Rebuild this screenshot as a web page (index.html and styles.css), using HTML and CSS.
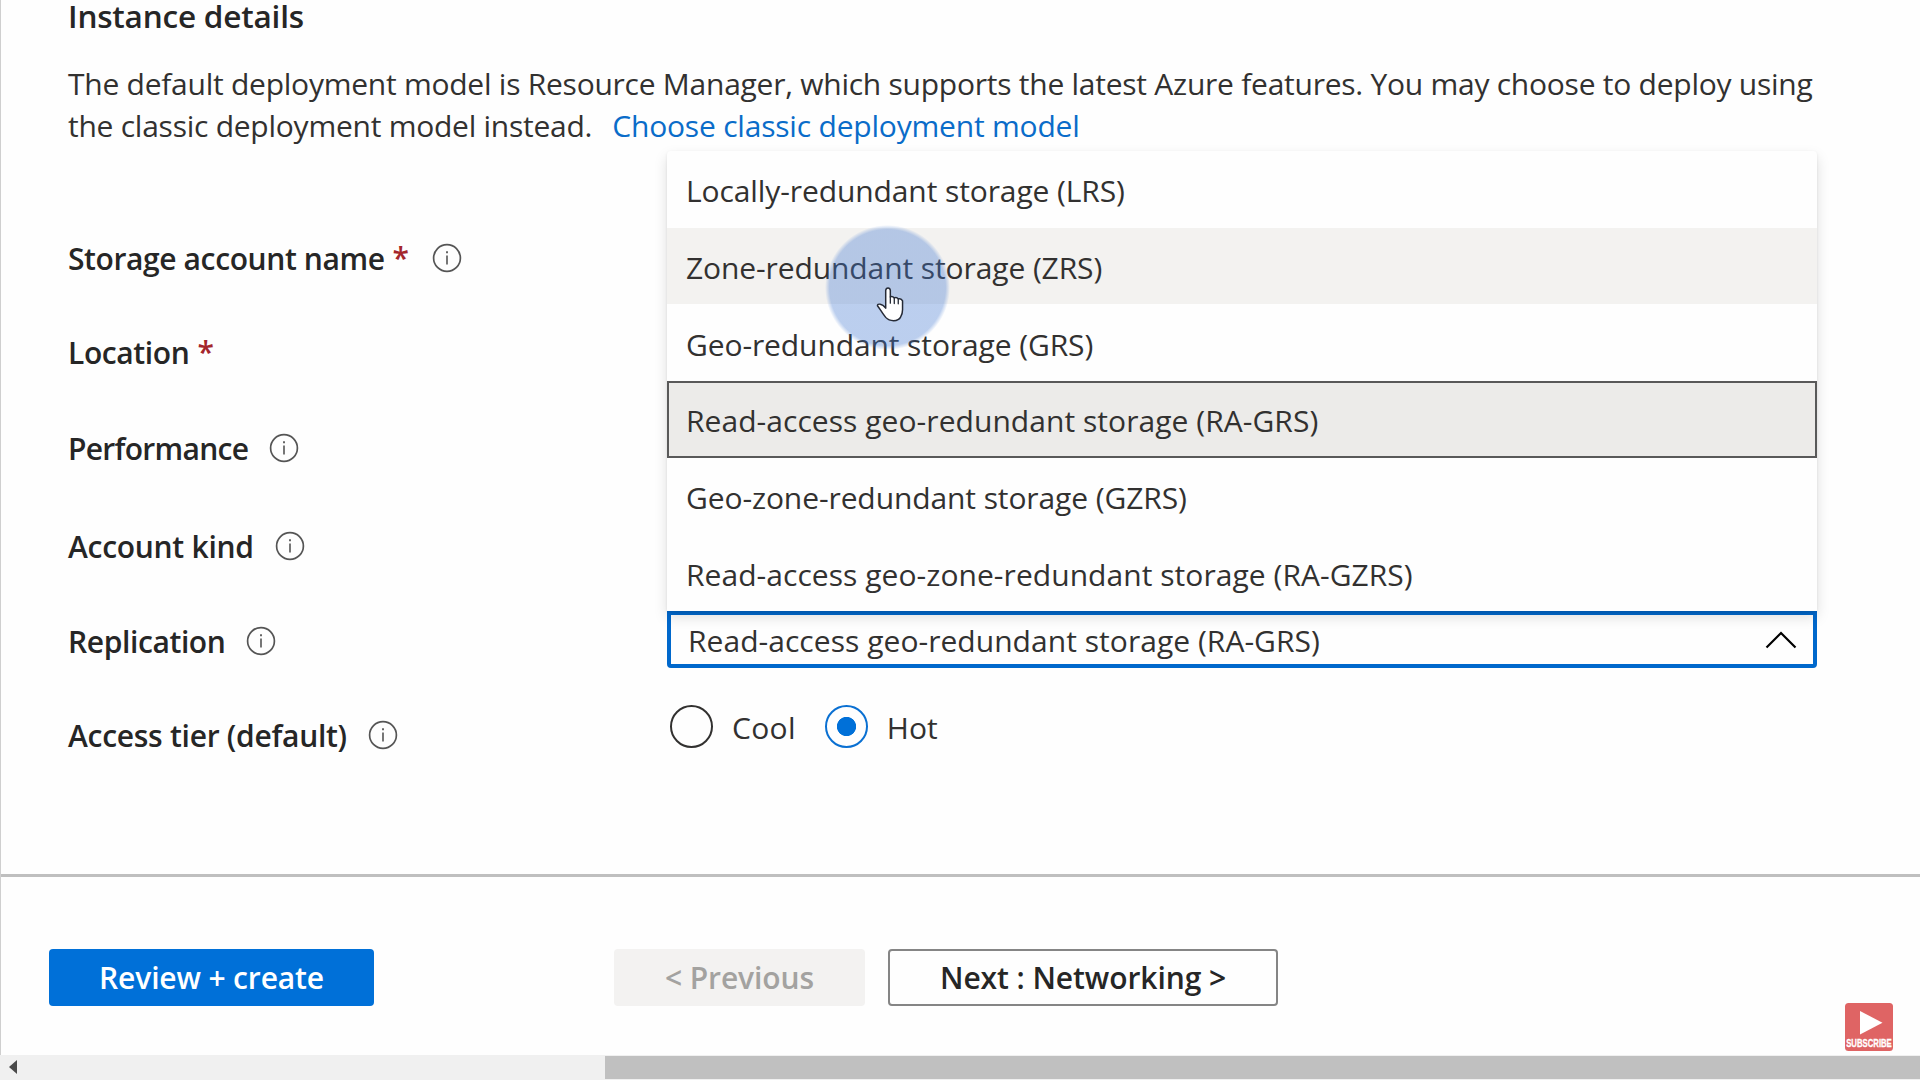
FILE: index.html
```html
<!DOCTYPE html>
<html lang="en">
<head>
<meta charset="utf-8">
<title>Create storage account</title>
<link rel="stylesheet" href="styles.css">
</head>
<body>
<svg class="sprite" aria-hidden="true">
  <symbol id="info" viewBox="0 0 30 30">
    <circle cx="15" cy="15" r="13.4" fill="none" stroke="currentColor" stroke-width="1.7"/>
    <path d="M14.1 8.2h1.8v2h-1.8zM14.2 12.6h1.6v9h-1.6z" fill="currentColor"/>
  </symbol>
</svg>
<div class="page">
  <main class="content">
    <h2 class="heading">Instance details</h2>
    <p class="intro">The default deployment model is Resource Manager, which supports the latest Azure features. You may choose to deploy using<br>the classic deployment model instead.<a class="link">Choose classic deployment model</a></p>
    <div class="form">
      <div class="label">Storage account name<span class="required">*</span><svg class="info"><use href="#info"/></svg></div>
      <div class="field"></div>
      <div class="label">Location<span class="required">*</span></div>
      <div class="field"></div>
      <div class="label label-tight">Performance<svg class="info"><use href="#info"/></svg></div>
      <div class="field"></div>
      <div class="label label-loose">Account kind<svg class="info"><use href="#info"/></svg></div>
      <div class="field"></div>
      <div class="label">Replication<svg class="info"><use href="#info"/></svg></div>
      <div class="select">
        <span>Read-access geo-redundant storage (RA-GRS)</span>
        <svg class="chevron" viewBox="0 0 32 18"><path d="M1.5 16.5 16 2l14.500 14.500" fill="none" stroke="#000" stroke-width="2.200"/></svg>
        <ul class="menu">
          <li class="option">Locally-redundant storage (LRS)</li>
          <li class="option option-hover">Zone-redundant storage (ZRS)</li>
          <li class="option">Geo-redundant storage (GRS)</li>
          <li class="option option-long option-selected">Read-access geo-redundant storage (RA-GRS)</li>
          <li class="option">Geo-zone-redundant storage (GZRS)</li>
          <li class="option option-long">Read-access geo-zone-redundant storage (RA-GZRS)</li>
        </ul>
      </div>
      <div class="label label-loose">Access tier (default)<svg class="info"><use href="#info"/></svg></div>
      <div class="radios">
        <span class="radio"></span><span class="radio-text radio-text-cool">Cool</span>
        <span class="radio radio-on"></span><span class="radio-text">Hot</span>
      </div>
    </div>
  </main>
  <footer class="footer">
    <button class="button primary">Review + create</button>
    <button class="button disabled">&lt; Previous</button>
    <button class="button outline">Next : Networking &gt;</button>
  </footer>
</div>
<div class="scrollbar">
  <svg class="arrow" viewBox="0 0 8 14"><path d="M8 0v14L0 7z" fill="#4a4a4a"/></svg>
  <div class="thumb"></div>
</div>
<div class="spotlight"></div>
<svg class="cursor" viewBox="228 230 84 106">
  <path d="M257 281V240q1-7 7-7 6 0 7 7v20q6-3 12 3 7-4 12 3 9-3 13 6v27q0 13-6 22-5 10-21 11-15 0-24-10-9-11-15-21-6-9-10-14 0-6 8-5 9 1 17 12z" fill="#fff" stroke="#252a36" stroke-width="4.500" stroke-linejoin="round"/>
  <path d="M271 260v19M283 263v17M295 266v15" fill="none" stroke="#252a36" stroke-width="4" stroke-linecap="round"/>
</svg>
<svg class="subscribe" viewBox="0 0 48 48">
  <rect width="48" height="48" rx="3.500" fill="#df6464"/>
  <path d="M15 8v23.500L37.500 19.700z" fill="#fff"/>
  <text class="subscribe-text" x="1.200" y="43.900" textLength="45.600" lengthAdjust="spacingAndGlyphs">SUBSCRIBE</text>
</svg>
</body>
</html>
```
FILE: styles.css
```css
* { box-sizing: border-box; }

body {
  margin: 0;
  height: 1080px;
  overflow: hidden;
  display: flex;
  flex-direction: column;
  background: #fefefe;
  color: #323130;
  font: 400 30px/41px "Open Sans", "Noto Sans", sans-serif;
}

.sprite { position: absolute; width: 0; height: 0; }

.page {
  height: 1055px;
  border-left: 1px solid #cfcfcf;
  display: flex;
  flex-direction: column;
}

.content { height: 874px; padding-left: 67px; }

.heading {
  margin: 0 0 32px;
  font-size: 31.5px;
  line-height: 31px;
  font-weight: 600;
  letter-spacing: -0.2px;
  color: #262626;
}

.intro { margin: 0; line-height: 41.5px; letter-spacing: -0.25px; white-space: nowrap; }
.link { margin-left: 20px; color: #0a6cc9; letter-spacing: -0.2px; }

.form {
  margin-top: 92px;
  display: grid;
  grid-template-columns: 599px 1150px;
  grid-template-rows: 94px 96px 98px 95px 94px 60px;
  align-items: start;
}

.label {
  display: flex;
  align-items: center;
  font-weight: 600;
  letter-spacing: -0.39px;
  color: #262626;
}

.label-tight { letter-spacing: -0.7px; }
.label-loose { letter-spacing: -0.28px; }
.required { margin: -2px 2px 0 8px; color: #a4262c; }
.info { width: 30px; height: 30px; margin: -2px 0 0 21px; color: #555; }

.select {
  position: relative;
  height: 57px;
  margin-top: -10px;
  padding: 2px 16px 0 17px;
  border: 4px solid #0068cc;
  border-radius: 0 0 4px 4px;
  display: flex;
  align-items: center;
  justify-content: space-between;
  letter-spacing: 0.04px;
}

.chevron { width: 32px; height: 18px; margin-top: -1px; }

.menu {
  position: absolute;
  left: -4px;
  right: -4px;
  bottom: 53px;
  height: 460px;
  margin: 0;
  padding: 0;
  list-style: none;
  display: grid;
  grid-template-rows: repeat(6, 1fr);
  background: #fefefe;
  border-radius: 4px 4px 0 0;
  box-shadow: 0 6px 14px rgba(0, 0, 0, 0.13), 0 1px 3px rgba(0, 0, 0, 0.08);
}

.option { display: flex; align-items: center; padding: 3px 0 0 19px; letter-spacing: -0.1px; }
.option-long { letter-spacing: 0.05px; }
.option-hover { background: #f3f2f0; }
.option-selected { background: #ecebe9; border: 2px solid #595959; padding: 3px 0 0 17px; }

.radios { display: flex; align-items: center; margin: -8px 0 0 3px; }

.radio {
  width: 43px;
  height: 43px;
  margin-top: -3px;
  border: 2px solid #323130;
  border-radius: 50%;
}

.radio-on {
  border-color: #0a70d2;
  background: radial-gradient(circle, #0070d8 9.2px, transparent 10px);
}

.radio-text { margin-left: 19px; }
.radio-text-cool { margin-right: 29px; letter-spacing: 0.3px; }

.footer {
  flex: 1;
  border-top: 3px solid #bfbfbf;
  padding: 72px 0 0 48px;
  display: flex;
  align-items: flex-start;
}

.button {
  height: 57px;
  padding: 0 0 1px;
  border: 0;
  border-radius: 4px;
  font: 600 30px/41px "Open Sans", "Noto Sans", sans-serif;
}

.primary { width: 325px; background: #0070d8; color: #fff; letter-spacing: -0.15px; }
.disabled { width: 251px; margin-left: 240px; background: #f3f2f1; color: #a3a2a0; letter-spacing: -0.1px; }
.outline { width: 390px; margin-left: 23px; background: #fefefe; border: 2px solid #858585; color: #262626; letter-spacing: -0.08px; }

.scrollbar {
  flex: 1;
  display: flex;
  align-items: center;
  padding-left: 9px;
  background: #f0f0f0;
}

.arrow { width: 8px; height: 14px; margin-top: -1px; }
.thumb { flex: 1; height: 23px; margin: 0 0 0 588px; background: #c0c0c0; }

.spotlight {
  position: absolute;
  left: 825px;
  top: 225px;
  width: 125px;
  height: 125px;
  border-radius: 50%;
  background: radial-gradient(circle, rgba(63, 118, 209, 0.35) 58px, rgba(63, 118, 209, 0) 62.5px);
}

.cursor { position: absolute; left: 876px; top: 287px; width: 28px; height: 35px; }
.subscribe { position: absolute; left: 1845px; top: 1003px; width: 48px; height: 48px; overflow: visible; }
.subscribe-text { font: 700 10px "Liberation Sans", sans-serif; fill: #fff; stroke: #fff; stroke-width: 0.3px; }
```
